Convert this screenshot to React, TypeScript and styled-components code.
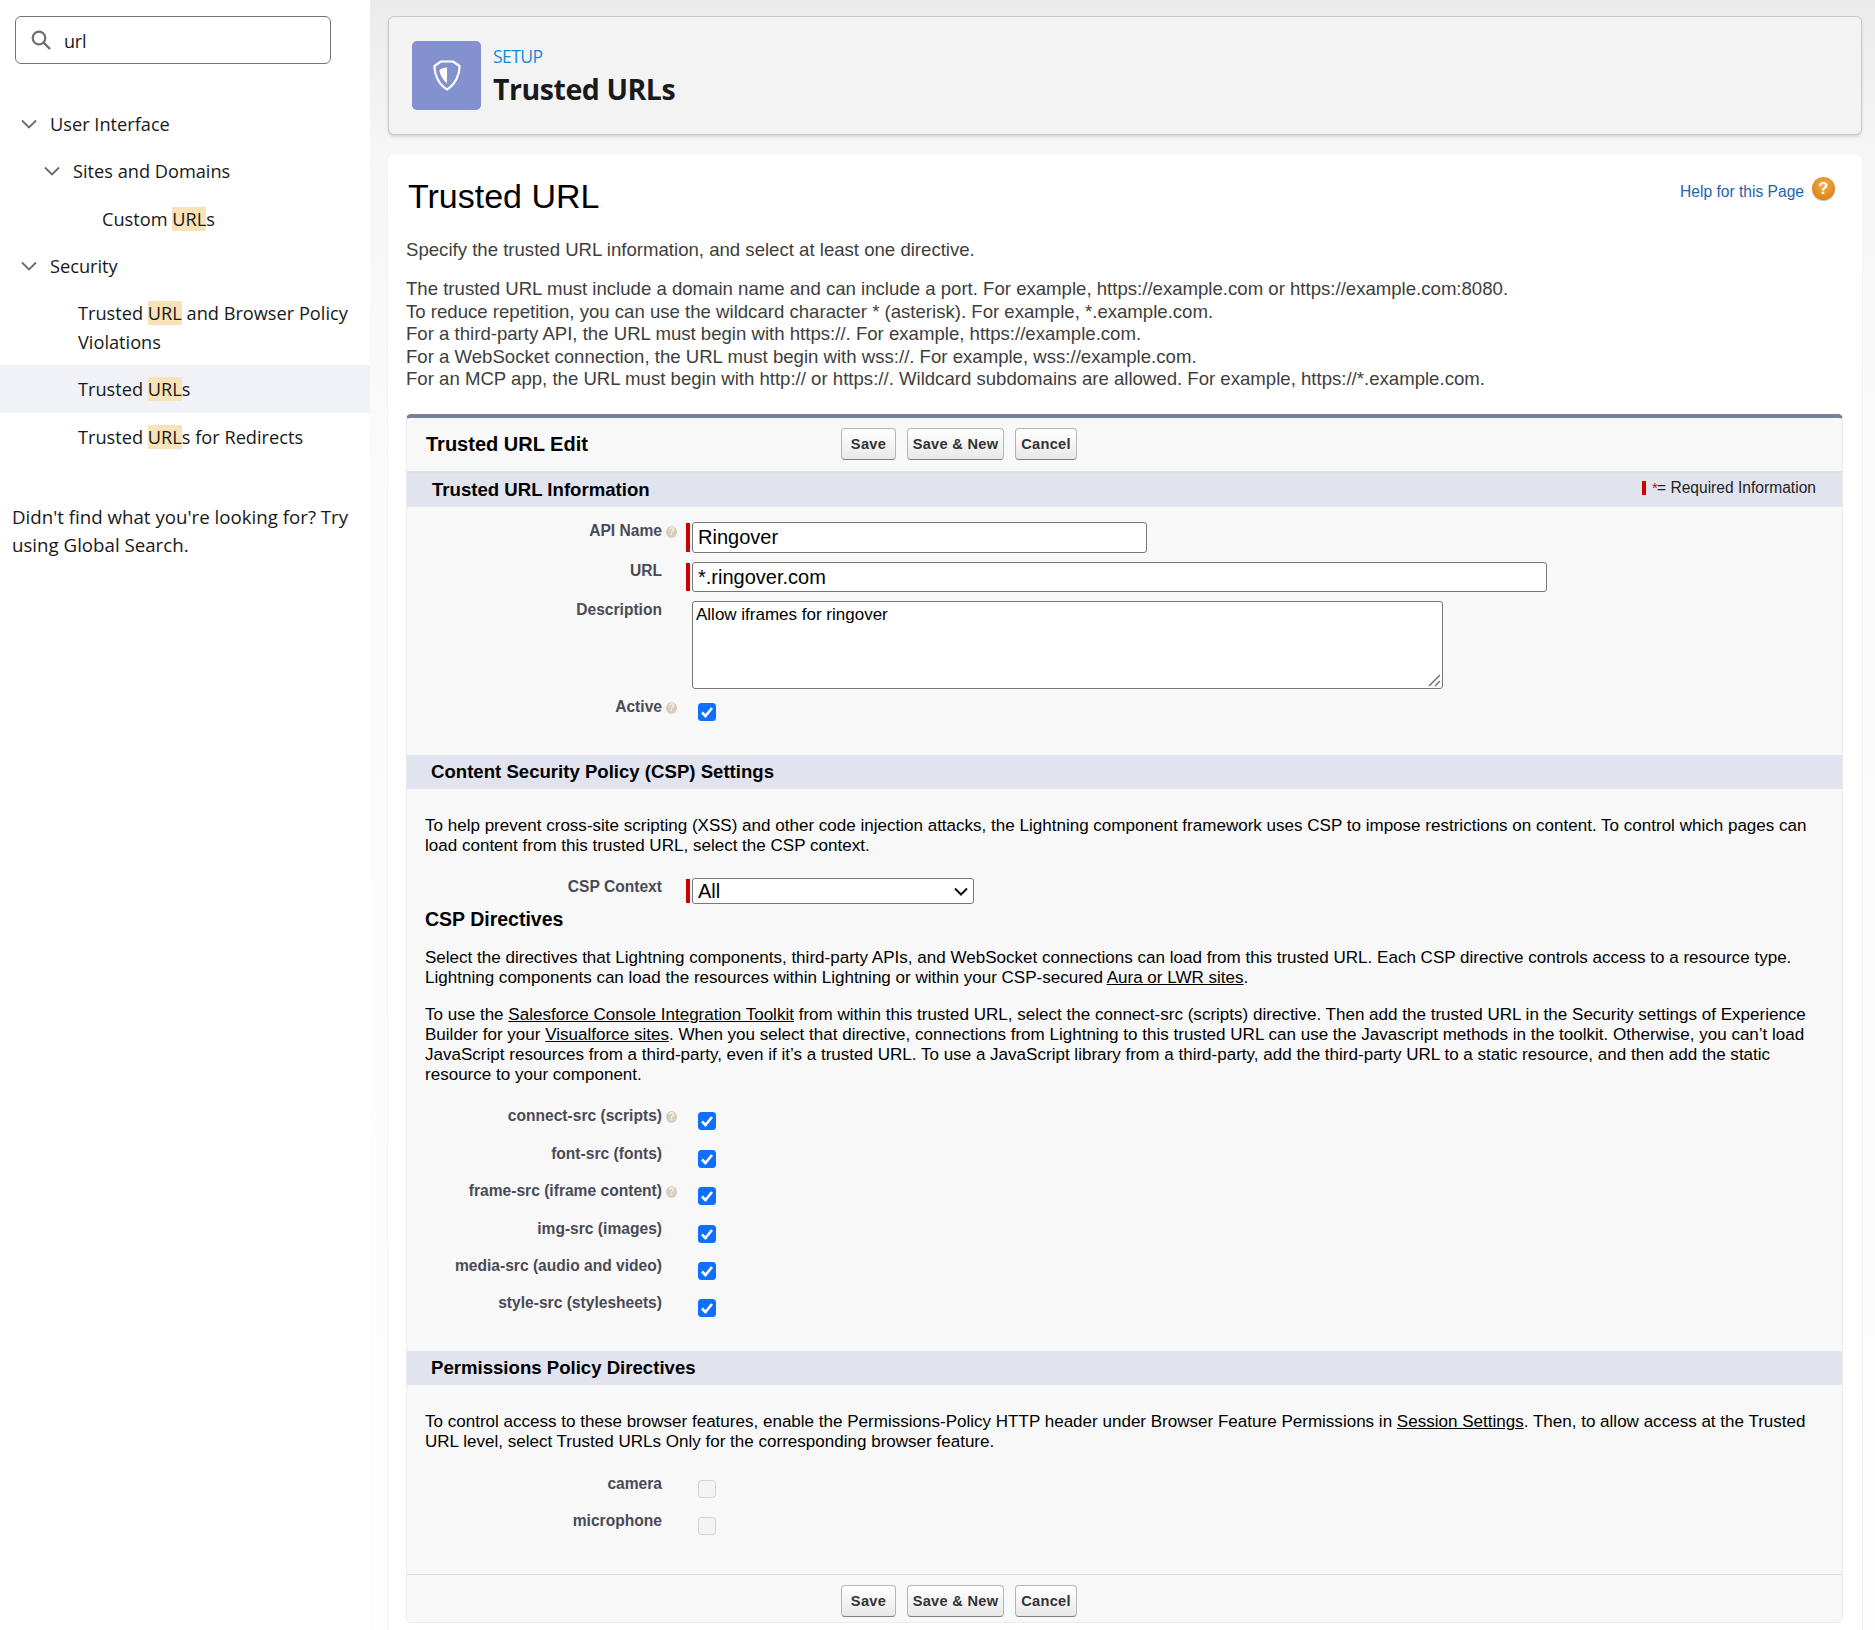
import React from "react";
import styled, { createGlobalStyle } from "styled-components";

const Global = createGlobalStyle`
  html, body { margin: 0; padding: 0; background: #fff; }
  body { font-family: "Liberation Sans", Arial, sans-serif; overflow: hidden; }
  * { box-sizing: border-box; }
`;

const Page = styled.div`
  display: flex;
  width: 1875px;
  height: 1630px;
  overflow: hidden;
`;

const Sidebar = styled.aside`
  width: 370px;
  flex: none;
  background: #fff;
  padding-top: 16px;
  font-family: "Open Sans", "Noto Sans", sans-serif;
  font-size: 18.2px;
  color: #181818;
`;

const SearchBox = styled.div`
  margin-left: 15px;
  width: 316px;
  height: 48px;
  border: 1px solid #747474;
  border-radius: 6px;
  display: flex;
  align-items: center;
  padding-left: 15px;
  gap: 13px;
`;

const SearchText = styled.span`
  font-size: 18px;
  letter-spacing: -0.2px;
  padding-top: 2px;
`;

const Tree = styled.nav`
  margin-top: 36px;
`;

const TreeRow = styled.div<{ $indent: number; $selected?: boolean; $tall?: boolean }>`
  display: flex;
  align-items: flex-start;
  min-height: ${(p) => (p.$tall ? 76.3 : 47.3)}px;
  padding: 10px 12px 0 ${(p) => p.$indent}px;
  line-height: 28.5px;
  background: ${(p) => (p.$selected ? "#f0f2f8" : "transparent")};
`;

const Chevron = styled.svg`
  flex: none;
  width: 16px;
  height: 10px;
  margin: 9px 13px 0 0;
`;

const Mark = styled.mark`
  background: #f8e2b8;
  color: inherit;
`;

const Hint = styled.p`
  margin: 43px 0 0;
  padding: 0 12px;
  font-size: 18.7px;
  line-height: 28px;
`;

const Main = styled.main`
  flex: 1;
  min-width: 0;
  padding: 16px 13px 0 18px;
  background: linear-gradient(#ebebeb 0, #f6f6f6 150px, #fbfbfb 500px, #fdfdfd 100%);
`;

const Header = styled.header`
  height: 119px;
  border: 1px solid #c9c9c9;
  border-radius: 6px;
  background: #f3f3f3;
  box-shadow: 0 2px 3px rgba(0, 0, 0, 0.12);
  display: flex;
  align-items: center;
  padding-left: 23px;
  gap: 12px;
`;

const Tile = styled.div`
  width: 69px;
  height: 69px;
  border-radius: 5px;
  background: #8391ce;
  display: flex;
  align-items: center;
  justify-content: center;
`;

const HeaderText = styled.div`
  font-family: "Open Sans", "Noto Sans", sans-serif;
  padding-top: 1px;
`;

const Eyebrow = styled.div`
  font-size: 17.6px;
  line-height: 24px;
  margin-bottom: 1px;
  color: #1589d9;
  letter-spacing: -0.6px;
`;

const HeaderTitle = styled.div`
  font-size: 28.5px;
  line-height: 40px;
  font-weight: 700;
  color: #1a1a1a;
  letter-spacing: -0.45px;
`;

const Panel = styled.section`
  margin-top: 19px;
  height: 1480px;
  background: #fff;
  border-radius: 6px 6px 0 0;
  padding: 0 19px 0 18px;
  box-shadow: 0 0 0 1px #f3f3f3;
`;

const TitleRow = styled.div`
  display: flex;
  justify-content: space-between;
  align-items: flex-start;
  height: 85px;
`;

const PageTitle = styled.h1`
  margin: 21px 0 0 2px;
  font-size: 34px;
  line-height: 42px;
  font-weight: 400;
  color: #000;
`;

const HelpLink = styled.a`
  display: flex;
  align-items: center;
  gap: 8px;
  margin: 26px 8px 0 0;
  color: #1b65ae;
  font-size: 15.6px;
  line-height: 24px;
`;

const HelpDot = styled.span`
  width: 23px;
  height: 23px;
  border-radius: 50%;
  background: radial-gradient(circle at 50% 35%, #f5ad47, #dc8518 75%, #b97316);
  color: #fff;
  font-size: 16px;
  font-weight: 700;
  line-height: 23px;
  text-align: center;
  box-shadow: 0 1px 1px rgba(0, 0, 0, 0.25);
  margin-top: -8px;
`;

const Intro = styled.p`
  margin: 0 0 17px;
  font-size: 18.6px;
  line-height: 22.4px;
  color: #3e3e3c;
`;

const Block = styled.div`
  margin-top: 24px;
  width: 1437px;
  height: 1209px;
  background: #f8f8f8;
  border: 1px solid #ececec;
  border-top: 4px solid #76829a;
  border-radius: 5px;
  display: flex;
  flex-direction: column;
  color: #000;
`;

const ButtonBar = styled.div<{ $bottom?: boolean }>`
  flex: none;
  display: flex;
  align-items: flex-start;
  height: ${(p) => (p.$bottom ? 49 : 55)}px;
  padding-top: 10px;
  ${(p) => (p.$bottom ? "border-top: 1px solid #dfdfdf; padding-left: 434px;" : "border-bottom: 2px solid #e1e1e1;")}
`;

const BlockTitle = styled.h2`
  margin: 0;
  width: 434px;
  padding-left: 19px;
  font-size: 20px;
  line-height: 32px;
  font-weight: 700;
`;

const Btn = styled.button<{ $w: number }>`
  width: ${(p) => p.$w}px;
  height: 32px;
  margin-right: 11px;
  padding: 0;
  border: 1px solid #b5b5b5;
  border-bottom-color: #7f7f7f;
  border-radius: 4px;
  background: linear-gradient(#ffffff, #f4f4f4 50%, #e8e8e9);
  color: #333;
  font: 700 14.6px "Liberation Sans", sans-serif;
  letter-spacing: 0.3px;
`;

const SectionBar = styled.div<{ $pad?: number }>`
  flex: none;
  height: 34px;
  background: #e1e4ee;
  display: flex;
  align-items: center;
  justify-content: space-between;
  padding: 0 26px 0 ${(p) => p.$pad ?? 24}px;
`;

const SectionTitle = styled.h3`
  margin: 0;
  font-size: 18.6px;
  line-height: 28px;
  font-weight: 700;
`;

const RequiredNote = styled.span`
  display: flex;
  align-items: center;
  font-size: 15.6px;
  margin-top: -4px;
  color: #222;
`;

const RedTick = styled.i`
  width: 4px;
  height: 14px;
  background: #c00;
  margin-right: 6px;
`;

const Star = styled.span`
  color: #b01020;
  font-size: 15px;
  margin: -2px -1px 0 0;
`;

const Row = styled.div<{ $h: number }>`
  display: grid;
  grid-template-columns: 270px 1fr;
  height: ${(p) => p.$h}px;
`;

const Label = styled.div`
  display: flex;
  justify-content: flex-end;
  font-size: 15.6px;
  font-weight: 700;
  line-height: 18px;
  color: #4a4a56;
  padding-right: 15px;
  position: relative;
`;

const HelpIcon = styled.span`
  position: absolute;
  right: 0;
  top: 4px;
  width: 11px;
  height: 12px;
  border-radius: 50%;
  background: #d6cebd;
  color: #f4f1ea;
  font-size: 10px;
  line-height: 12px;
  text-align: center;
`;

const Value = styled.div<{ $required?: boolean; $offset?: number }>`
  display: flex;
  align-items: flex-start;
  padding-left: ${(p) => (p.$required ? 9 : 15)}px;
  margin-top: ${(p) => p.$offset ?? 0}px;
`;

const Bar = styled.i`
  flex: none;
  width: 4px;
  background: #c00;
  margin: 1px 2px 1px 0;
  align-self: stretch;
`;

const RequiredWrap = styled.div`
  display: flex;
`;

const TextInput = styled.input<{ $w: number; $h: number }>`
  width: ${(p) => p.$w}px;
  height: ${(p) => p.$h}px;
  font: 20px "Liberation Sans", sans-serif;
  color: #000;
  border: 1px solid #767676;
  border-radius: 3px;
  padding: 0 5px;
  background: #fff;
`;

const AreaWrap = styled.div`
  position: relative;
  width: 751px;
  height: 88px;
`;

const Area = styled.textarea`
  width: 100%;
  height: 100%;
  font: 17px "Liberation Sans", sans-serif;
  color: #000;
  border: 1px solid #767676;
  border-radius: 3px;
  padding: 3px;
  background: #fff;
  display: block;
  resize: none;
`;

const Grip = styled.svg`
  position: absolute;
  right: 2px;
  bottom: 2px;
  width: 13px;
  height: 13px;
`;

const SelectWrap = styled.div`
  position: relative;
  width: 282px;
  height: 26px;
`;

const Select = styled.select`
  width: 100%;
  height: 100%;
  display: block;
  font: 20px "Liberation Sans", sans-serif;
  color: #000;
  border: 1px solid #767676;
  border-radius: 3px;
  background: #fff;
  padding: 0 0 0 5px;
  appearance: none;
`;

const SelectArrow = styled.svg`
  position: absolute;
  right: 6px;
  top: 9px;
  width: 14px;
  height: 9px;
`;

const Check = styled.input.attrs({ type: "checkbox" })`
  appearance: none;
  width: 18px;
  height: 18px;
  margin: 0 0 0 6px;
  border-radius: 3.5px;
  border: 1.5px solid #d2d2d2;
  background: #f4f4f4;
  &:checked {
    border: 0;
    background: #0f6fff url("data:image/svg+xml,%3Csvg xmlns='http://www.w3.org/2000/svg' viewBox='0 0 18 18'%3E%3Cpath d='M4 9.500 L7.500 13 L14 5' fill='none' stroke='white' stroke-width='2.600'/%3E%3C/svg%3E") center / 18px 18px no-repeat;
  }
`;

const SectionBody = styled.div<{ $top: number; $h: number }>`
  flex: none;
  height: ${(p) => p.$h}px;
  padding-top: ${(p) => p.$top}px;
`;

const Para = styled.p<{ $after?: number }>`
  margin: 0 0 ${(p) => p.$after ?? 0}px;
  padding: 0 18px;
  font-size: 17.05px;
  line-height: 20px;
  color: #000;
`;

const UnderLink = styled.a`
  color: inherit;
  text-decoration: underline;
`;

const SubHead = styled.h4`
  margin: 0 0 18px;
  padding-left: 18px;
  font-size: 19.5px;
  line-height: 22px;
  font-weight: 700;
`;

const Shield = () => (
  <svg width="28" height="31" viewBox="0 0 28 31" fill="none">
    <path d="M8 1.500 H20 L26.500 6 C27 14 22 25 14 29.500 C6 25 1 14 1.500 6 Z" stroke="#fff" strokeWidth="2.200" strokeLinejoin="round" />
    <path d="M14 7.500 V23.500 C9.500 19.500 6.500 14 6.500 10 C8 8.500 11 7.500 14 7.500 Z" fill="#fff" />
  </svg>
);

const ChevronIcon = () => (
  <Chevron viewBox="0 0 16 10" fill="none">
    <path d="M1 1.500 L8 8.500 L15 1.500" stroke="#6b6b6b" strokeWidth="1.800" />
  </Chevron>
);

const SearchIcon = () => (
  <svg width="20" height="20" viewBox="0 0 20 20" fill="none">
    <circle cx="8" cy="8" r="6.300" stroke="#6f6f6f" strokeWidth="2.200" />
    <path d="M12.600 12.600 L19 19" stroke="#6f6f6f" strokeWidth="2.400" />
  </svg>
);

const FieldLabel = ({ text, help }: { text: string; help?: boolean }) => (
  <Label>
    {text}
    {help && <HelpIcon>?</HelpIcon>}
  </Label>
);

const directives: [string, boolean][] = [
  ["connect-src (scripts)", true],
  ["font-src (fonts)", false],
  ["frame-src (iframe content)", true],
  ["img-src (images)", false],
  ["media-src (audio and video)", false],
  ["style-src (stylesheets)", false],
];

const Buttons = () => (
  <>
    <Btn $w={55}>Save</Btn>
    <Btn $w={97}>Save &amp; New</Btn>
    <Btn $w={62}>Cancel</Btn>
  </>
);

export default function App() {
  return (
    <Page>
      <Global />
      <Sidebar>
        <SearchBox>
          <SearchIcon />
          <SearchText>url</SearchText>
        </SearchBox>
        <Tree>
          <TreeRow $indent={21}><ChevronIcon />User Interface</TreeRow>
          <TreeRow $indent={44}><ChevronIcon />Sites and Domains</TreeRow>
          <TreeRow $indent={102}><span>Custom <Mark>URL</Mark>s</span></TreeRow>
          <TreeRow $indent={21}><ChevronIcon />Security</TreeRow>
          <TreeRow $indent={78} $tall><span>Trusted <Mark>URL</Mark> and Browser Policy Violations</span></TreeRow>
          <TreeRow $indent={78} $selected><span>Trusted <Mark>URL</Mark>s</span></TreeRow>
          <TreeRow $indent={78}><span>Trusted <Mark>URL</Mark>s for Redirects</span></TreeRow>
        </Tree>
        <Hint>Didn't find what you're looking for? Try using Global Search.</Hint>
      </Sidebar>
      <Main>
        <Header>
          <Tile><Shield /></Tile>
          <HeaderText>
            <Eyebrow>SETUP</Eyebrow>
            <HeaderTitle>Trusted URLs</HeaderTitle>
          </HeaderText>
        </Header>
        <Panel>
          <TitleRow>
            <PageTitle>Trusted URL</PageTitle>
            <HelpLink>Help for this Page <HelpDot>?</HelpDot></HelpLink>
          </TitleRow>
          <Intro>Specify the trusted URL information, and select at least one directive.</Intro>
          <Intro>
            The trusted URL must include a domain name and can include a port. For example, https://example.com or https://example.com:8080.<br />
            To reduce repetition, you can use the wildcard character * (asterisk). For example, *.example.com.<br />
            For a third-party API, the URL must begin with https://. For example, https://example.com.<br />
            For a WebSocket connection, the URL must begin with wss://. For example, wss://example.com.<br />
            For an MCP app, the URL must begin with http:// or https://. Wildcard subdomains are allowed. For example, https://*.example.com.
          </Intro>
          <Block>
            <ButtonBar>
              <BlockTitle>Trusted URL Edit</BlockTitle>
              <Buttons />
            </ButtonBar>
            <SectionBar $pad={25}>
              <SectionTitle>Trusted URL Information</SectionTitle>
              <RequiredNote><RedTick /><Star>*</Star>= Required Information</RequiredNote>
            </SectionBar>
            <SectionBody $top={15} $h={248}>
              <Row $h={40}>
                <FieldLabel text="API Name" help />
                <Value $required>
                  <RequiredWrap><Bar /><TextInput $w={455} $h={31} defaultValue="Ringover" /></RequiredWrap>
                </Value>
              </Row>
              <Row $h={39}>
                <FieldLabel text="URL" />
                <Value $required>
                  <RequiredWrap><Bar /><TextInput $w={855} $h={30} defaultValue="*.ringover.com" /></RequiredWrap>
                </Value>
              </Row>
              <Row $h={97}>
                <FieldLabel text="Description" />
                <Value>
                  <AreaWrap>
                    <Area defaultValue="Allow iframes for ringover" />
                    <Grip viewBox="0 0 13 13" fill="none">
                      <path d="M1 12 L12 1 M7 12 L12 7" stroke="#666" strokeWidth="1.300" />
                    </Grip>
                  </AreaWrap>
                </Value>
              </Row>
              <Row $h={40}>
                <FieldLabel text="Active" help />
                <Value $offset={5}><Check defaultChecked /></Value>
              </Row>
            </SectionBody>
            <SectionBar>
              <SectionTitle>Content Security Policy (CSP) Settings</SectionTitle>
            </SectionBar>
            <SectionBody $top={27} $h={562}>
              <Para $after={22}>
                To help prevent cross-site scripting (XSS) and other code injection attacks, the Lightning component framework uses CSP to impose restrictions on content. To control which pages can load content from this trusted URL, select the CSP context.
              </Para>
              <Row $h={30}>
                <FieldLabel text="CSP Context" />
                <Value $required>
                  <RequiredWrap>
                    <Bar />
                    <SelectWrap>
                      <Select defaultValue="All"><option>All</option></Select>
                      <SelectArrow viewBox="0 0 14 9" fill="none">
                        <path d="M1 1.500 L7 7.500 L13 1.500" stroke="#111" strokeWidth="2" />
                      </SelectArrow>
                    </SelectWrap>
                  </RequiredWrap>
                </Value>
              </Row>
              <SubHead>CSP Directives</SubHead>
              <Para $after={17}>
                Select the directives that Lightning components, third-party APIs, and WebSocket connections can load from this trusted URL. Each CSP directive controls access to a resource type. Lightning components can load the resources within Lightning or within your CSP-secured <UnderLink>Aura or LWR sites</UnderLink>.
              </Para>
              <Para $after={22}>
                To use the <UnderLink>Salesforce Console Integration Toolkit</UnderLink> from within this trusted URL, select the connect-src (scripts) directive. Then add the trusted URL in the Security settings of Experience Builder for your <UnderLink>Visualforce sites</UnderLink>. When you select that directive, connections from Lightning to this trusted URL can use the Javascript methods in the toolkit. Otherwise, you can’t load JavaScript resources from a third-party, even if it’s a trusted URL. To use a JavaScript library from a third-party, add the third-party URL to a static resource, and then add the static resource to your component.
              </Para>
              {directives.map(([name, help]) => (
                <Row $h={37.4} key={name}>
                  <FieldLabel text={name} help={help} />
                  <Value $offset={5}><Check defaultChecked /></Value>
                </Row>
              ))}
            </SectionBody>
            <SectionBar>
              <SectionTitle>Permissions Policy Directives</SectionTitle>
            </SectionBar>
            <SectionBody $top={27} $h={189}>
              <Para $after={23}>
                To control access to these browser features, enable the Permissions-Policy HTTP header under Browser Feature Permissions in <UnderLink>Session Settings</UnderLink>. Then, to allow access at the Trusted URL level, select Trusted URLs Only for the corresponding browser feature.
              </Para>
              <Row $h={37}>
                <FieldLabel text="camera" />
                <Value $offset={5}><Check disabled /></Value>
              </Row>
              <Row $h={37}>
                <FieldLabel text="microphone" />
                <Value $offset={5}><Check disabled /></Value>
              </Row>
            </SectionBody>
            <ButtonBar $bottom>
              <Buttons />
            </ButtonBar>
          </Block>
        </Panel>
      </Main>
    </Page>
  );
}
